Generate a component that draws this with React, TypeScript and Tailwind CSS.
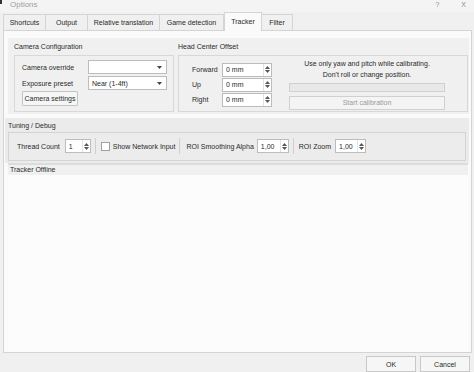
import React from 'react';

const tabs = ['Shortcuts', 'Output', 'Relative translation', 'Game detection', 'Tracker', 'Filter'];
const tabWidths = ['w-[43px]', 'w-[42px]', 'w-[72px]', 'w-[64px]', 'w-[38px]', 'w-[31px]'];

function Arrows() {
  return (
    <div className="flex flex-col items-center justify-center gap-[1px] w-[8px] h-full border-l border-[#e3e3e3]">
      <svg width="5" height="3" viewBox="0 0 5 3"><path d="M0 3 L2.5 0 L5 3 Z" fill="#555" /></svg>
      <svg width="5" height="3" viewBox="0 0 5 3"><path d="M0 0 L2.5 3 L5 0 Z" fill="#555" /></svg>
    </div>
  );
}

function SpinBox({ value, width }: { value: string; width: string }) {
  return (
    <div className={`${width} h-[14px] flex items-stretch bg-white border border-[#bcbcbc]`}>
      <span className="flex-1 pl-[3px] flex items-center">{value}</span>
      <Arrows />
    </div>
  );
}

function Combo({ value }: { value?: string }) {
  return (
    <div className="w-[79px] h-[14px] flex items-center justify-between bg-white border border-[#bcbcbc] px-[3px]">
      <span>{value}</span>
      <svg width="5" height="3" viewBox="0 0 5 3" className="mr-[1px]"><path d="M0 0 L2.5 3 L5 0 Z" fill="#444" /></svg>
    </div>
  );
}

function Sep() {
  return <div className="w-px h-[16px] bg-[#cfcfcf] mx-[4px]" />;
}

export default function App() {
  return (
    <div className="w-[474px] h-[372px] bg-[#f0f0f0] text-[7px] leading-none text-[#2a2a2a] overflow-hidden flex flex-col font-['Tahoma','Liberation_Sans',sans-serif]">
      {/* title bar */}
      <div className="h-[12px] flex items-start justify-between bg-[#f4f4f4] overflow-hidden">
        <div className="flex items-start">
          <div className="w-[2px] h-[4px] bg-[#333]" />
          <span className="ml-[8px] mt-[1px] text-[8px] text-[#a0a0a0]">Options</span>
        </div>
        <div className="flex items-start gap-[22px] mr-[8px] mt-[1px] text-[7px] text-[#8a8a8a]">
          <span>?</span>
          <span>X</span>
        </div>
      </div>

      {/* tabs */}
      <div className="h-[18px] flex items-end pl-[3px] relative z-10">
        {tabs.map((t, i) => {
          const selected = t === 'Tracker';
          return (
            <div
              key={t}
              className={`${tabWidths[i]} flex items-center justify-center border border-b-0 border-[#d4d4d4] ${
                selected ? 'h-[19px] bg-[#fafafa] -mb-px' : 'h-[16px] bg-[#f0f0f0]'
              } ${i > 0 && i !== 5 ? '' : ''} ${i === 5 ? 'border-l-0' : ''} ${i > 0 && i < 4 ? 'border-l-0' : ''}`}
            >
              {t}
            </div>
          );
        })}
      </div>

      {/* pane */}
      <div className="ml-[3px] w-[469px] h-[328px] border border-[#d4d4d4] bg-[#fafafa] flex flex-col">
        {/* top groups */}
        <div className="mt-[7px] ml-[4px] w-[461px] h-[76px] bg-[#f0f0f0] flex">
          <div className="w-[168px] flex flex-col">
            <div className="h-[16px] pl-[6px] flex items-center mt-[1px]">Camera Configuration</div>
            <div className="ml-[6px] w-[160px] h-[57px] border border-[#d8d8d8] flex flex-col pl-[7px] pt-[4px]">
              <div className="flex items-center h-[15px]">
                <span className="w-[66px]">Camera override</span>
                <Combo />
              </div>
              <div className="flex items-center h-[15px] mt-[1px]">
                <span className="w-[66px]">Exposure preset</span>
                <Combo value="Near (1-4ft)" />
              </div>
              <div className="w-[56px] h-[15px] flex items-center justify-center bg-[#f6f6f6] border border-[#c4c4c4] rounded-[1px]">
                Camera settings
              </div>
            </div>
          </div>
          <div className="flex-1 flex flex-col">
            <div className="h-[16px] pl-[2px] flex items-center mt-[1px]">Head Center Offset</div>
            <div className="ml-[2px] w-[290px] h-[57px] border border-[#d8d8d8] flex">
              <div className="flex flex-col pl-[13px] pt-[7px] gap-[1px]">
                {['Forward', 'Up', 'Right'].map(l => (
                  <div key={l} className="flex items-center h-[14px]">
                    <span className="w-[30px]">{l}</span>
                    <SpinBox value="0 mm" width="w-[50px]" />
                  </div>
                ))}
              </div>
              <div className="ml-[17px] w-[156px] flex flex-col pt-[2px]">
                <div className="text-center leading-[11px]">
                  Use only yaw and pitch while calibrating.
                  <br />
                  Don't roll or change position.
                </div>
                <div className="mt-[3px] h-[9px] border border-[#d0d0d0] bg-[#e8e8e8]" />
                <div className="mt-[4px] h-[14px] flex items-center justify-center border border-[#d0d0d0] bg-[#f4f4f4] text-[#9a9a9a]">
                  Start calibration
                </div>
              </div>
            </div>
          </div>
        </div>

        {/* tuning */}
        <div className="mt-[4px] ml-[1px] w-[464px] h-[45px] bg-[#ebebeb] flex flex-col">
          <div className="h-[14px] pl-[3px] flex items-center pt-[1px]">Tuning / Debug</div>
          <div className="ml-[3px] w-[458px] h-[29px] border border-[#d4d4d4] bg-[#ececec] flex items-center pl-[8px]">
            <span className="mr-[5px]">Thread Count</span>
            <SpinBox value="1" width="w-[26px]" />
            <Sep />
            <div className="w-[9px] h-[9px] bg-white border border-[#a0a0a0] ml-[1px] mr-[3px]" />
            <span>Show Network Input</span>
            <Sep />
            <span className="ml-[2px] mr-[3px]">ROI Smoothing Alpha</span>
            <SpinBox value="1,00" width="w-[32px]" />
            <Sep />
            <span className="ml-[1px] mr-[4px]">ROI Zoom</span>
            <SpinBox value="1,00" width="w-[31px]" />
          </div>
        </div>

        {/* log */}
        <div className="ml-[4px] w-[460px] flex-1 border-t-2 border-[#dcdcdc] bg-[#fcfcfc] flex flex-col">
          <div className="h-[10px] bg-[#f0f0f0] pl-[2px] flex items-center">Tracker Offline</div>
        </div>
      </div>

      {/* buttons */}
      <div className="flex justify-end gap-[4px] pr-[4px] pt-[3px]">
        <div className="w-[50px] h-[16px] flex items-center justify-center bg-[#f6f6f6] border border-[#c8c8c8]">OK</div>
        <div className="w-[50px] h-[16px] flex items-center justify-center bg-[#f6f6f6] border border-[#c8c8c8]">Cancel</div>
      </div>
    </div>
  );
}
